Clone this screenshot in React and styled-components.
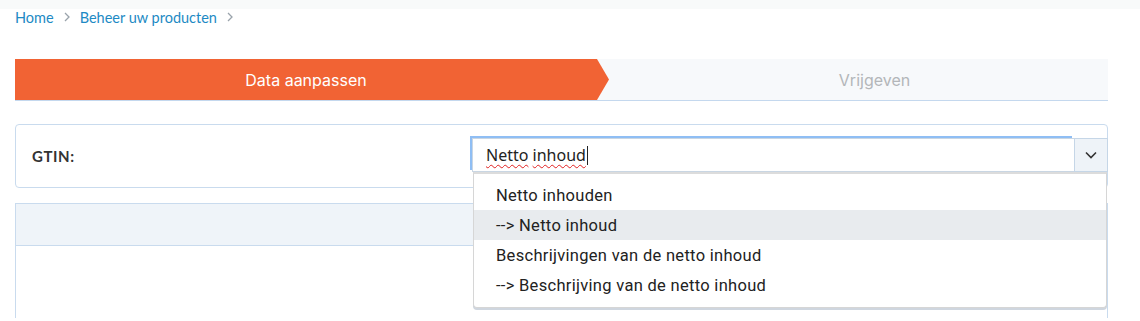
import React from "react";
import styled, { createGlobalStyle } from "styled-components";

const Global = createGlobalStyle`
  html, body { margin: 0; padding: 0; background: #fff; }
  body { width: 1140px; height: 321px; overflow: hidden; font-family: "Open Sans", "Noto Sans", sans-serif; }
  * { box-sizing: border-box; }
`;

const TopBand = styled.div`
  height: 9px;
  background: #f8fafa;
`;

const Page = styled.div`
  padding: 0 32px 0 15px;
`;

const Breadcrumb = styled.nav`
  display: flex;
  align-items: center;
  gap: 8px;
  height: 16px;
  font-family: "Lato", "Open Sans", sans-serif;
  font-size: 14.5px;
  color: #1d8ac4;
`;

const Crumb = styled.span`
  color: #1d8ac4;
`;

const Sep = styled.svg`
  width: 8px;
  height: 10px;
  margin: 0 1px;
`;

const Stepper = styled.div`
  margin-top: 34px;
  display: flex;
  height: 42px;
  border-bottom: 1px solid #c4d8ee;
  background: #f7f9fb;
`;

const Step = styled.div`
  position: relative;
  display: flex;
  align-items: center;
  justify-content: center;
  font-family: "Inter", "Roboto", sans-serif;
  font-size: 16px;
  ${(p) =>
    p.$active
      ? `
    width: 582px;
    background: #f16334;
    color: #fff;
  `
      : `
    flex: 1;
    padding-left: 44px;
    color: #b3b6b9;
  `}
`;

const Arrow = styled.svg`
  position: absolute;
  right: -12px;
  top: 0;
  width: 12px;
  height: 41px;
`;

const Card = styled.div`
  margin-top: 23px;
  height: 64px;
  border: 1px solid #c9dbee;
  border-radius: 4px;
  display: grid;
  grid-template-columns: 440px 1fr;
  align-items: center;
  padding-left: 16px;
`;

const Label = styled.div`
  font-family: "Lato", sans-serif;
  font-weight: 700;
  font-size: 15px;
  color: #333;
  letter-spacing: 0.6px;
`;

const Combo = styled.div`
  position: relative;
  display: flex;
  height: 34px;
  margin-right: -1px;
  margin-top: -2px;
`;

const Input = styled.div`
  flex: 1;
  display: flex;
  align-items: center;
  padding-left: 13px;
  border: 1px solid #c9d6e3;
  border-right: none;
  box-shadow: -2px -2px 0 0 #8fbef4;
  font-family: "Noto Sans", "Open Sans", sans-serif;
  font-size: 16px;
  color: #222;
`;

const Squiggle = styled.span`
  text-decoration: underline wavy #e02020;
  text-decoration-thickness: 1px;
  text-underline-offset: 3px;
`;

const Caret = styled.span`
  display: inline-block;
  width: 1px;
  height: 19px;
  background: #222;
  margin-left: 1px;
`;

const Toggle = styled.div`
  width: 34px;
  display: flex;
  align-items: center;
  justify-content: center;
  background: #eef3f8;
  border: 1px solid #c5d6e7;
`;

const Menu = styled.ul`
  position: absolute;
  z-index: 2;
  left: 1px;
  right: 1px;
  top: 34px;
  margin: 0;
  padding: 6px 0 7px;
  list-style: none;
  background: #fff;
  border: 1px solid #d6d6d6;
  border-top: 2px solid #dcdcdc;
  border-radius: 0 0 4px 4px;
  box-shadow: 0 2px 0 #cfd6df;
`;

const Item = styled.li`
  height: 30px;
  display: flex;
  align-items: center;
  padding-left: 22px;
  font-family: "Roboto", "Noto Sans", sans-serif;
  font-size: 16.5px;
  letter-spacing: 0.3px;
  color: #222;
  background: ${(p) => (p.$hi ? "#e8ebee" : "transparent")};
`;

const Panel = styled.div`
  margin-top: 15px;
  height: 115px;
  border: 1px solid #c9dbee;
  border-bottom: none;
`;

const PanelHead = styled.div`
  height: 42px;
  background: #eff4f9;
  border-bottom: 1px solid #c9dbee;
`;

const Chevron = () => (
  <Sep viewBox="0 0 8 10">
    <path d="M2 1l4 4-4 4" fill="none" stroke="#9aa3ab" strokeWidth="1.3" />
  </Sep>
);

export default function App() {
  const items = [
    "Netto inhouden",
    "--> Netto inhoud",
    "Beschrijvingen van de netto inhoud",
    "--> Beschrijving van de netto inhoud",
  ];
  return (
    <>
      <Global />
      <TopBand />
      <Page>
        <Breadcrumb>
          <Crumb>Home</Crumb>
          <Chevron />
          <Crumb>Beheer uw producten</Crumb>
          <Chevron />
        </Breadcrumb>
        <Stepper>
          <Step $active>
            Data aanpassen
            <Arrow viewBox="0 0 12 41" preserveAspectRatio="none">
              <polygon points="0,0 0,41 0,41 12,20.5" fill="#f16334" />
            </Arrow>
          </Step>
          <Step>Vrijgeven</Step>
        </Stepper>
        <Card>
          <Label>GTIN:</Label>
          <Combo>
            <Input>
              <Squiggle>Netto</Squiggle>&nbsp;<Squiggle>inhoud</Squiggle>
              <Caret />
            </Input>
            <Toggle>
              <svg width="12" height="8" viewBox="0 0 12 8">
                <path d="M1 1.5l5 5 5-5" fill="none" stroke="#333" strokeWidth="1.6" />
              </svg>
            </Toggle>
            <Menu>
              {items.map((t, i) => (
                <Item key={t} $hi={i === 1}>
                  {t}
                </Item>
              ))}
            </Menu>
          </Combo>
        </Card>
        <Panel>
          <PanelHead />
        </Panel>
      </Page>
    </>
  );
}
